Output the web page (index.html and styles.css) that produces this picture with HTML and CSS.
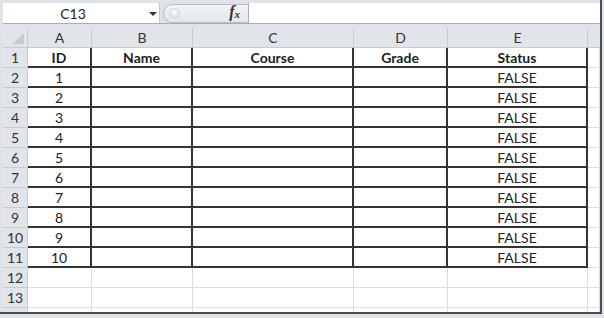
FILE: index.html
```html
<!DOCTYPE html>
<html lang="en">
<head>
  <meta charset="UTF-8">
  <title>Students - Excel</title>
  <link rel="stylesheet" href="styles.css">
</head>
<body>
  <div class="window">
    <!-- Formula bar -->
    <div class="formula-bar">
      <div class="name-box">
        <span class="cell-ref">C13</span>
        <span class="drop-arrow"></span>
      </div>
      <div class="fx-area">
        <span class="knob"></span>
        <span class="fx">f<sub>x</sub></span>
      </div>
      <div class="formula-input"></div>
    </div>

    <!-- Sheet grid -->
    <div class="sheet" id="sheet"></div>
  </div>

  <script>
    const cols = ['A', 'B', 'C', 'D', 'E'];
    const headers = ['ID', 'Name', 'Course', 'Grade', 'Status'];
    const sheet = document.getElementById('sheet');

    function cell(cls, text) {
      const div = document.createElement('div');
      div.className = cls;
      div.textContent = text || '';
      sheet.appendChild(div);
    }

    // Column headers
    cell('corner');
    cols.forEach(c => cell('col-head', c));
    cell('col-head last');

    // Rows
    for (let r = 1; r <= 14; r++) {
      cell('row-head', r);
      const inTable = r <= 11;
      cols.forEach((c, i) => {
        let text = '';
        if (r === 1) text = headers[i];
        else if (inTable && i === 0) text = r - 1;
        else if (inTable && i === 4) text = 'FALSE';
        let cls = inTable ? 'cell boxed' : 'cell';
        if (r === 1) cls += ' bold';
        cell(cls, text);
      });
      cell('cell');
    }
  </script>
</body>
</html>
```

FILE: styles.css
```css
* {
  margin: 0;
  padding: 0;
  box-sizing: border-box;
}

body {
  background: #dfe3e8;
  font-family: Lato, "Open Sans", sans-serif;
  color: #222;
}

.window {
  width: 602px;
  height: 314px;
  padding: 3px 0 0 3px;
  background: #dfe3e8;
  border-right: 2px solid #4d4d4d;
  border-bottom: 2px solid #4d4d4d;
  overflow: hidden;
}

/* Formula bar */
.formula-bar {
  display: flex;
  height: 21px;
  border-bottom: 1px solid #a7adb5;
  margin-bottom: 4px;
}

.name-box {
  width: 157px;
  background: #fff;
  position: relative;
  border-right: 1px solid #c3c8ce;
}

.cell-ref {
  display: block;
  width: 140px;
  text-align: center;
  font-size: 14px;
  line-height: 21px;
}

.drop-arrow {
  position: absolute;
  left: 146px;
  top: 9px;
  border-left: 4px solid transparent;
  border-right: 4px solid transparent;
  border-top: 4px solid #333;
}

.fx-area {
  width: 88px;
  position: relative;
  background: #dfe3e8;
}

.fx-area::before {
  content: "";
  position: absolute;
  left: 3px;
  top: 1px;
  right: 0;
  bottom: 0;
  background: linear-gradient(#f2f3f5, #e4e7eb);
  border: 1px solid #b9bec5;
  border-right: none;
  border-radius: 10px 0 0 10px;
}

.knob {
  position: absolute;
  left: 9px;
  top: 5px;
  width: 11px;
  height: 11px;
  border-radius: 50%;
  background: radial-gradient(circle at 50% 35%, #ffffff, #cfd3d8);
  border: 1px solid #d5d9de;
}

.fx {
  position: absolute;
  right: 8px;
  top: 0;
  font-family: "Liberation Serif", serif;
  font-style: italic;
  font-weight: bold;
  font-size: 16px;
  color: #333;
}

.fx sub {
  font-size: 11px;
  vertical-align: baseline;
  position: relative;
  top: 1px;
}

.formula-input {
  flex: 1;
  background: #fff;
  border-left: 1px solid #a7adb5;
}

/* Sheet */
.sheet {
  display: grid;
  grid-template-columns: 25px 64px 101px 161px 94px 140px 12px;
  grid-auto-rows: 20px;
  background: #fff;
  font-size: 14px;
}

.corner,
.col-head,
.row-head {
  background: #e1e5ea;
  color: #333;
  text-align: center;
  line-height: 19px;
  border-right: 1px solid #c5cbd2;
  border-bottom: 1px solid #c5cbd2;
}

.corner {
  position: relative;
}

.corner::after {
  content: "";
  position: absolute;
  right: 3px;
  bottom: 3px;
  border-left: 11px solid transparent;
  border-bottom: 11px solid #c8ccd1;
}

.col-head.last {
  border-right: none;
}

.cell {
  text-align: center;
  line-height: 20px;
  border-right: 1px solid #dadde0;
  border-bottom: 1px solid #dadde0;
}

.cell.boxed {
  border-right: 2px solid #333;
  border-bottom: 2px solid #333;
}

.cell.bold {
  font-weight: bold;
}
```
